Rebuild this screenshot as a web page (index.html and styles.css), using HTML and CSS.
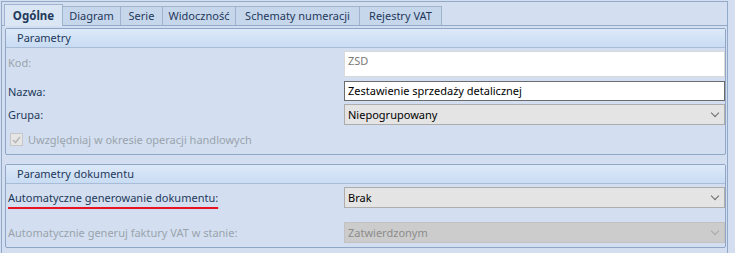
FILE: index.html
```html
<!DOCTYPE html>
<html lang="pl">
<head>
    <meta charset="UTF-8" />
    <title>Ogólne</title>
    <link rel="stylesheet" href="styles.css">
</head>
<body>

<div class="window">
    <div class="tabs">
        <div class="tab active">Ogólne</div>
        <div class="tab" style="width: 58px">Diagram</div>
        <div class="tab" style="width: 42px">Serie</div>
        <div class="tab" style="width: 73px">Widoczność</div>
        <div class="tab" style="width: 124px">Schematy numeracji</div>
        <div class="tab" style="width: 82px">Rejestry VAT</div>
    </div>

    <div class="panel">
        <div class="group group-main">
            <div class="group-head">Parametry</div>
            <div class="group-body">
                <div class="row row-kod">
                    <span class="label disabled">Kod:</span>
                    <div class="field field-readonly">ZSD</div>
                </div>
                <div class="row row-nazwa">
                    <span class="label">Nazwa:</span>
                    <div class="field field-edit">Zestawienie sprzedaży detalicznej</div>
                </div>
                <div class="row row-grupa">
                    <span class="label">Grupa:</span>
                    <div class="field field-select">Niepogrupowany<span class="chevron"></span></div>
                </div>
                <div class="check-row">
                    <span class="checkbox">
                        <svg width="9" height="8" viewBox="0 0 9 8"><path d="M1 4 L3.5 6.5 L8 1" fill="none" stroke="#b8b8b8" stroke-width="1.6"/></svg>
                    </span>
                    <span class="label disabled">Uwzględniaj w okresie operacji handlowych</span>
                </div>
            </div>
        </div>

        <div class="group group-doc">
            <div class="group-head">Parametry dokumentu</div>
            <div class="group-body">
                <div class="row row-auto">
                    <span class="label marked">Automatyczne generowanie dokumentu:</span>
                    <div class="field field-select">Brak<span class="chevron"></span></div>
                </div>
                <div class="row row-vat">
                    <span class="label disabled">Automatycznie generuj faktury VAT w stanie:</span>
                    <div class="field field-select field-off">Zatwierdzonym<span class="chevron"></span></div>
                </div>
            </div>
        </div>
    </div>
</div>

</body>
</html>
```

FILE: styles.css
```css
body {
    margin: 0;
    background: #d3dff0;
    font-family: "Noto Sans", Arial, sans-serif;
    font-size: 11px;
    color: #1e395b;
    width: 735px;
    height: 253px;
    overflow: hidden;
}

.window {
    margin: 1px 0 0 1px;
    width: 727px;
    height: 252px;
    border-top: 1px solid #93a9c8;
    border-left: 1px solid #93a9c8;
    border-right: 1px solid #93a9c8;
    box-sizing: border-box;
}

.tabs {
    display: flex;
    align-items: flex-end;
    height: 23px;
    padding-left: 2px;
}

.tab {
    height: 19px;
    box-sizing: border-box;
    border: 1px solid #9fb3cd;
    border-bottom: none;
    border-left: none;
    background: #c6d6eb;
    color: #1e395b;
    text-align: center;
    line-height: 18px;
}

.tab.active {
    width: 59px;
    height: 22px;
    margin-bottom: -1px;
    border-left: 1px solid #9fb3cd;
    background: #dbe6f4;
    font-weight: bold;
    font-size: 11.5px;
    line-height: 21px;
    position: relative;
}

.panel {
    border-top: 1px solid #93a9c8;
    padding: 2px 0 0 3px;
}

.group {
    width: 721px;
    border: 1px solid #8fa6c6;
    border-radius: 2px;
    box-sizing: border-box;
}

.group-main {
    height: 127px;
}

.group-doc {
    margin-top: 9px;
    height: 84px;
}

.group-head {
    height: 18px;
    line-height: 17px;
    padding-left: 11px;
    background: linear-gradient(#dce9f9, #c9dcf2);
    border-bottom: 1px solid #a8bcd8;
    color: #1e395b;
}

.group-body {
    padding: 3px 0 0 2px;
}

.row {
    display: flex;
    align-items: center;
}

.label {
    width: 336px;
    flex: none;
}

.label.disabled {
    color: #9aa3ad;
}

.label.marked {
    text-decoration: underline;
    text-decoration-color: #e8131f;
    text-decoration-thickness: 2px;
    text-underline-offset: 5px;
}

.field {
    width: 382px;
    box-sizing: border-box;
    padding-left: 3px;
    position: relative;
}

.field-readonly {
    height: 26px;
    background: #ffffff;
    border: 1px solid #dadada;
    color: #7a7a7a;
    line-height: 18px;
}

.row-kod .label {
    align-self: flex-start;
    margin-top: 4px;
}

.row-nazwa {
    margin-top: 4px;
}

.field-edit {
    height: 20px;
    background: #ffffff;
    border: 1px solid #6b6b6b;
    color: #000;
    line-height: 18px;
}

.row-grupa {
    margin-top: 3px;
}

.field-select {
    height: 21px;
    background: #e4e4e4;
    border: 1px solid #adadad;
    color: #000;
    line-height: 19px;
}

.field-off {
    background: #cccccc;
    border-color: #c2c2c2;
    color: #8c8c8c;
}

.chevron {
    position: absolute;
    right: 6px;
    top: 5px;
    width: 5px;
    height: 5px;
    border-right: 1px solid #6a6a6a;
    border-bottom: 1px solid #6a6a6a;
    transform: rotate(45deg);
}

.field-off .chevron {
    border-color: #a8a8a8;
}

.check-row {
    display: flex;
    align-items: center;
    margin-top: 7px;
    padding-left: 2px;
}

.checkbox {
    width: 11px;
    height: 11px;
    border: 1px solid #c6c6c6;
    background: #e6e6e6;
    display: flex;
    align-items: center;
    justify-content: center;
    margin-right: 5px;
}

.row-auto {
    margin-top: 0;
}

.row-vat {
    margin-top: 14px;
}
```
